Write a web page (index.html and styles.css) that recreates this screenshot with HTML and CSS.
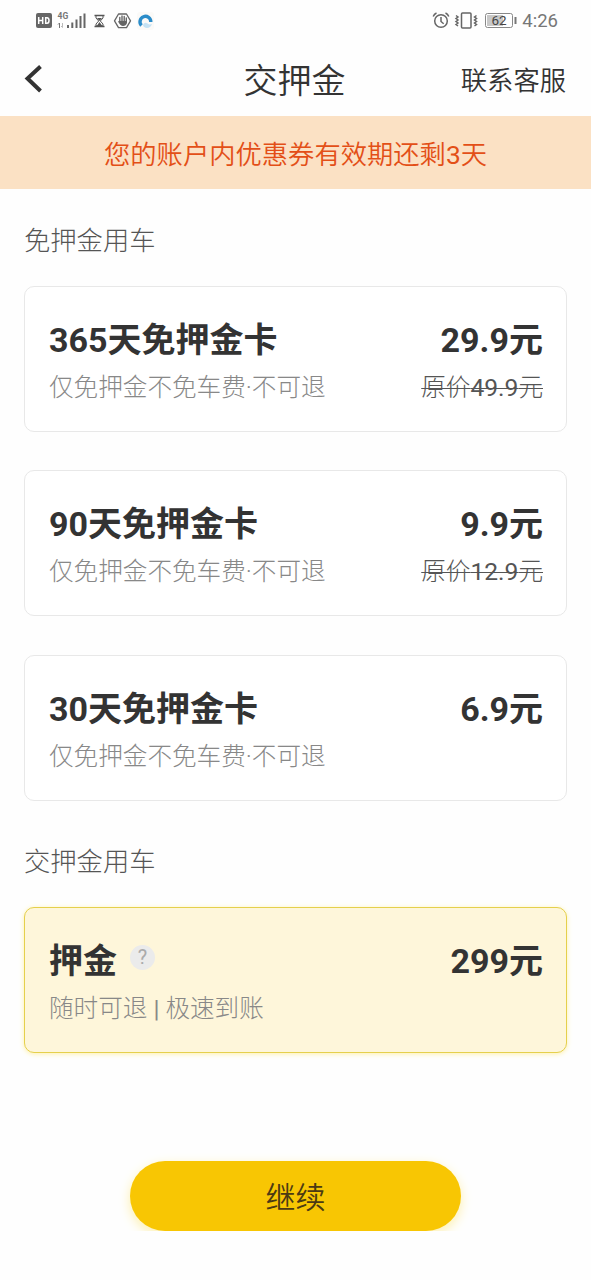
FILE: index.html
```html
<!DOCTYPE html>
<html lang="zh-CN">
<head>
<meta charset="utf-8">
<meta name="viewport" content="width=device-width">
<title>交押金</title>
<link rel="stylesheet" href="styles.css">
</head>
<body>
<div class="status">
  <svg class="status-left" width="120" height="22" viewBox="0 0 120 22">
    <rect x="1" y="3" width="16" height="15" rx="2" fill="#666"/>
    <path d="M3.700 7v7M7.700 7v7M3.700 10.500h4M10.700 7.700v5.600h1.300q2 0 2-2.800t-2-2.800z" fill="none" stroke="#fff" stroke-width="1.500"/>
    <text class="net" x="22.500" y="9">4G</text>
    <path d="M23 14.500l1.500-1.500v5" fill="none" stroke="#777" stroke-width="1"/>
    <path d="M27.500 13v4.500l-1.500-1.500" fill="none" stroke="#bbb" stroke-width="1"/>
    <path d="M33 15v3M37.300 12.500V18M41.500 9.500V18M45.500 6V18M49.500 3.500V18" stroke="#666" stroke-width="2"/>
    <path d="M59.500 5.500h10M59.500 16.500h10" stroke="#555" stroke-width="1.300"/>
    <path d="M61 6v2l2.700 3-2.700 3v2h7v-2l-2.700-3 2.700-3V6" fill="none" stroke="#555" stroke-width="1"/>
    <path d="M62 8h5l-2.500 3zM64.500 12l2.800 4h-5.600z" fill="#555"/>
    <path d="M83.500 4h8l4 6.800-4 6.800h-8l-4-6.800z" fill="none" stroke="#666" stroke-width="1.300" stroke-linejoin="round"/>
    <path d="M84.800 12V7.500M87 11V6M89.200 11V6.500M91.300 11.500V8" stroke="#666" stroke-width="1.400" stroke-linecap="round"/>
    <path d="M84 11h8v2q-1 3-4 3-2.500 0-5-4.500l1-.5 1 1z" fill="#666"/>
    <rect x="102" y="2" width="17" height="18" rx="3" fill="#fbfaf8"/>
    <path d="M106.500 15.500A5.400 5.400 0 1 1 115.800 12" fill="none" stroke="#2b8cc9" stroke-width="3.400"/>
    <path d="M108 15q1.500-3.500 4.500-1.500 2 1.500 4.500.5-1.500 4-5 4-3.500-.5-4-3z" fill="#c4e2f4"/>
  </svg>
  <div class="status-right">
    <svg width="88" height="22" viewBox="0 0 88 22">
      <g fill="none" stroke="#666" stroke-width="1.500">
        <circle cx="11" cy="11" r="6.300"/>
        <path d="M11 7v4.500l2.700 2.300M3.200 6.500q1-2.500 3.300-3.500M18.800 6.500q-1-2.500-3.300-3.500"/>
        <rect x="31.500" y="3" width="9.500" height="15" rx="1"/>
        <path d="M26 5.500l2 1.500-2 1.500 2 1.500-2 1.500 2 1.500-2 1.500 2 1.500M46.500 5.500l-2 1.500 2 1.500-2 1.500 2 1.500-2 1.500 2 1.500-2 1.500"/>
      </g>
      <rect x="55.500" y="3.500" width="27" height="14" rx="2" fill="#fff" stroke="#888"/>
      <rect x="57" y="5" width="16" height="11" fill="#c8c8c8"/>
      <path d="M85.500 7v7" stroke="#777" stroke-width="2"/>
      <text class="level" x="61.500" y="15">62</text>
    </svg>
    <span class="clock">4:26</span>
  </div>
</div>

<header class="nav">
  <svg class="back" width="20" height="30" viewBox="0 0 20 30"><path d="M18.500 2.500L5.500 14.500 18.500 27" fill="none" stroke="#333" stroke-width="4"/></svg>
  <h1 class="title">交押金</h1>
  <span class="service">联系客服</span>
</header>
<div class="banner">您的账户内优惠券有效期还剩<span class="num">3</span>天</div>

<main class="content">
  <h2 class="section">免押金用车</h2>
  <div class="cards">
    <div class="card">
      <div class="row"><span class="name">365天免押金卡</span><span class="price">29.9元</span></div>
      <div class="row sub"><span>仅免押金不免车费·不可退</span><s class="old">原价<span class="num">49.9</span>元</s></div>
    </div>
    <div class="card">
      <div class="row"><span class="name">90天免押金卡</span><span class="price">9.9元</span></div>
      <div class="row sub"><span>仅免押金不免车费·不可退</span><s class="old">原价<span class="num">12.9</span>元</s></div>
    </div>
    <div class="card">
      <div class="row"><span class="name">30天免押金卡</span><span class="price">6.9元</span></div>
      <div class="row sub"><span>仅免押金不免车费·不可退</span></div>
    </div>
  </div>
  <h2 class="section second">交押金用车</h2>
  <div class="card selected">
    <div class="row"><span class="name">押金<span class="help">?</span></span><span class="price">299元</span></div>
    <div class="row sub"><span>随时可退 <span class="num">|</span> 极速到账</span></div>
  </div>
  <button class="submit">继续</button>
</main>
</body>
</html>
```

FILE: styles.css
```css
* { box-sizing: border-box; }
body {
  margin: 0;
  background: #fefefe;
  color: #333;
  font-family: Roboto, "Noto Sans CJK SC", sans-serif;
  font-weight: 350;
}
.num { font-weight: 400; }
.status {
  display: flex;
  justify-content: space-between;
  height: 41px;
  padding: 10px 33px 0 35px;
}
.status-right { display: flex; height: 22px; gap: 4px; }
.clock { font-size: 18.500px; font-weight: 400; line-height: 23px; color: #777; }
.net { font: bold 8.500px Roboto, sans-serif; fill: #777; }
.level { font: 400 13.500px Roboto, sans-serif; fill: #444; }
.nav {
  display: grid;
  grid-template-columns: 1fr auto 1fr;
  align-items: center;
  height: 75px;
  padding: 0 25px 0 22px;
}
.title { margin: 0; padding: 4px 0 0 1px; font-size: 34px; font-weight: 350; line-height: 48px; }
.service { justify-self: end; padding-top: 5px; font-size: 26.300px; line-height: 36px; }
.banner {
  height: 73px;
  padding-top: 2px;
  background: #fbe1c4;
  color: #e34f17;
  font-size: 26.300px;
  line-height: 74px;
  text-align: center;
}
.content { display: flex; flex-direction: column; padding: 34px 24px 0; }
.section { margin: 0 0 26px; font-size: 26.300px; font-weight: 300; line-height: 37px; color: #555; }
.second { margin-top: 43px; }
.cards { display: grid; gap: 38.300px; }
.card {
  height: 146px;
  padding: 29px 23px 0 24px;
  border: 1.500px solid #e8e8e8;
  border-radius: 10px;
  background: #fff;
}
.row { display: flex; justify-content: space-between; height: 48px; line-height: 49px; }
.name, .price { font-size: 34px; font-weight: 700; }
.price { line-height: 48px; }
.name { display: flex; align-items: center; padding-top: 1px; }
.sub { color: #888; height: 46px; line-height: 47px; font-size: 24.600px; font-weight: 300; }
.old { color: #555; text-decoration-thickness: 1px; }
.selected { background: #fef6da; border-color: #e5d04c; box-shadow: 0 1px 5px #fff0a8; }
.help {
  width: 25px;
  height: 25px;
  margin: -7px 0 0 13px;
  border-radius: 50%;
  background: #ebebeb;
  color: #aaa;
  font-size: 20px;
  font-weight: 400;
  line-height: 25px;
  text-align: center;
}
.submit {
  align-self: center;
  width: 331px;
  height: 70px;
  margin-top: 108px;
  padding: 0;
  border: 0;
  border-radius: 35px;
  background: #f8c603;
  box-shadow: 0 4px 12px #fdf0ae;
  color: #4b3a14;
  font: 350 30px/74px Roboto, "Noto Sans CJK SC", sans-serif;
}
```
